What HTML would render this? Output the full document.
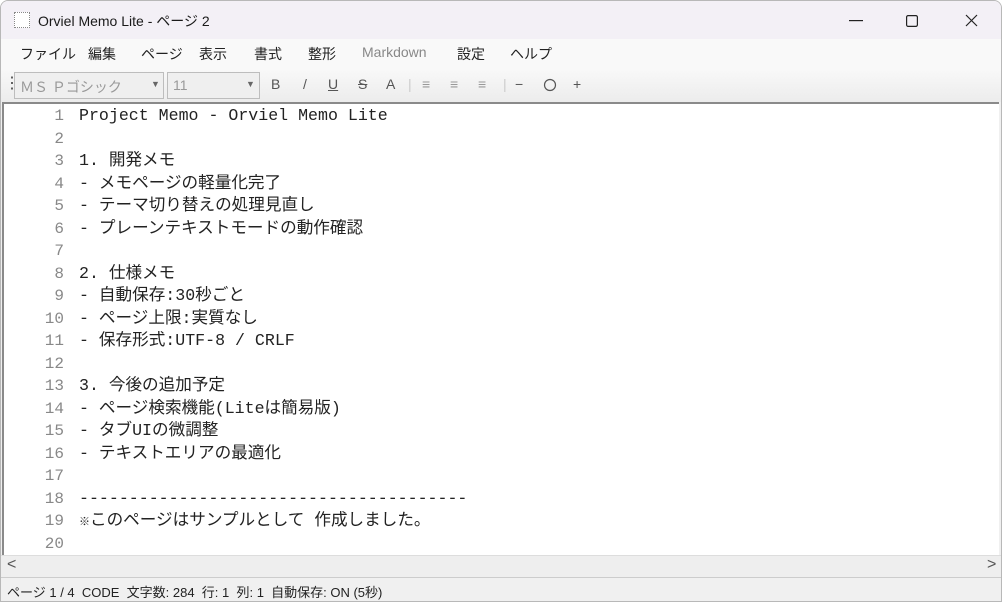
<!DOCTYPE html>
<html><head><meta charset="utf-8"><style>
*{margin:0;padding:0;box-sizing:border-box}
body{width:1002px;height:602px;overflow:hidden;background:#fff;font-family:"Liberation Sans","Noto Sans CJK JP",sans-serif;position:relative}
.win{position:absolute;left:0;top:0;width:1002px;height:602px;border:1px solid #b8b8b8;border-radius:8px 8px 0 0;overflow:hidden;background:#f0f0f0}
.title{position:absolute;left:0;top:0;width:100%;height:38px;background:#f3f0f6;font-size:14px;color:#1a1a1a}
.title .t{position:absolute;left:37px;top:10px}
.ico{position:absolute;left:13px;top:11px;width:16px;height:16px;border:1px dotted #888;background:#fff}
.menu{position:absolute;top:38px;left:0;width:100%;height:31px;background:#f9f9f9;font-size:14px;color:#222}
.menu span{position:absolute;top:5px}
.tb{position:absolute;top:69px;left:0;width:100%;height:32px;background:linear-gradient(#f8f8f8,#ececec);font-size:14px;color:#555}
.tb span{position:absolute;top:6px}
.cb{position:absolute;top:2px;height:27px;border:1px solid #bdbdbd;background:#efefef;color:#999;font-size:14px;padding:4px 5px}
.ed{position:absolute;top:101px;left:1px;width:997px;height:453px;background:#fff;border-top:2px solid #8a8a8a;border-left:2px solid #8a8a8a}
.ln{position:absolute;left:0;width:60px;text-align:right;font:16px/22px "Liberation Mono",monospace;color:#888;height:22px}
.tx{position:absolute;left:75px;font:16.6px/22px "Liberation Mono","Noto Sans CJK JP",monospace;color:#222;white-space:pre;height:22px}
.j{font-size:16.2px}
.hs{position:absolute;top:554px;left:0;width:100%;height:22px;background:#eeeeee;border-top:1px solid #ddd}
.st{position:absolute;top:576px;left:0;width:100%;height:26px;background:#f0f0f0;border-top:1px solid #ccc;font-size:13px;color:#222}
</style></head><body><div class="win">
<div class="title"><div class="ico"></div><div class="t">Orviel Memo Lite - ページ 2</div>
<svg style="position:absolute;left:848px;top:19px" width="14" height="2"><rect width="14" height="1.2" fill="#222"/></svg>
<svg style="position:absolute;left:905px;top:14px" width="12" height="12"><rect x=".6" y=".6" width="10.8" height="10.8" rx="1.5" fill="none" stroke="#222" stroke-width="1.2"/></svg>
<svg style="position:absolute;left:964px;top:13px" width="13" height="13"><path d="M1 1L12 12M12 1L1 12" stroke="#222" stroke-width="1.2"/></svg>
</div>
<div class="menu"><span style="left:19px">ファイル</span><span style="left:87px">編集</span><span style="left:140px">ページ</span><span style="left:198px">表示</span><span style="left:253px">書式</span><span style="left:307px">整形</span><span style="left:361px;color:#888">Markdown</span><span style="left:456px">設定</span><span style="left:509px">ヘルプ</span></div>
<div class="tb"><span style="left:3px;top:3px;color:#444;font-size:16px">⋮</span>
<div class="cb" style="left:13px;width:150px">ＭＳ Ｐゴシック<span style="left:136px;top:6px;font-size:9px;color:#666">▼</span></div>
<div class="cb" style="left:166px;width:93px">11<span style="left:78px;top:6px;font-size:9px;color:#666">▼</span></div>
<span style="left:270px">B</span><span style="left:302px">/</span><span style="left:327px;text-decoration:underline">U</span><span style="left:357px;text-decoration:line-through">S</span><span style="left:385px">A</span>
<span style="left:407px;color:#ccc">|</span><span style="left:421px;color:#999">≡</span><span style="left:449px;color:#999">≡</span><span style="left:477px;color:#999">≡</span><span style="left:502px;color:#ccc">|</span>
<span style="left:514px">−</span><svg style="position:absolute;left:542px;top:8px" width="14" height="14"><circle cx="7" cy="7" r="5.5" fill="none" stroke="#555" stroke-width="1.2"/></svg><span style="left:572px">+</span></div>
<div class="ed"><div id="c"></div></div>
<div class="hs"><span style="position:absolute;left:6px;top:0px;color:#555;font-size:16px">&lt;</span><span style="position:absolute;left:986px;top:0;color:#555;font-size:16px">&gt;</span></div>
<div class="st"><span style="position:absolute;left:6px;top:4px">ページ 1 / 4&nbsp; CODE&nbsp; 文字数: 284&nbsp; 行: 1&nbsp; 列: 1&nbsp; 自動保存: ON (5秒)</span></div>
</div>
<script>
var L=["Project Memo - Orviel Memo Lite","","1. 開発メモ","- メモページの軽量化完了","- テーマ切り替えの処理見直し","- プレーンテキストモードの動作確認","","2. 仕様メモ","- 自動保存:30秒ごと","- ページ上限:実質なし","- 保存形式:UTF-8 / CRLF","","3. 今後の追加予定","- ページ検索機能(Liteは簡易版)","- タブUIの微調整","- テキストエリアの最適化","","---------------------------------------","<span style='font-size:11px'>※</span>このページはサンプルとして 作成しました。",""];
var h="";for(var i=0;i<20;i++){var y=1+i*22.5;h+='<div class="ln" style="top:'+y+'px">'+(i+1)+'</div><div class="tx" style="top:'+y+'px">'+L[i]+'</div>';}
document.getElementById("c").innerHTML=h;
</script>
</body></html>
